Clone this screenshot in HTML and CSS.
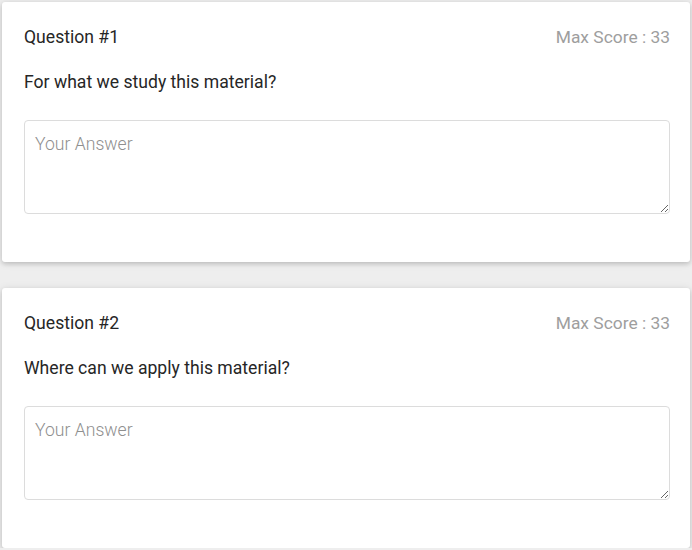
FILE: index.html
```html
<!DOCTYPE html>
<html>
<head>
<meta charset="utf-8">
<link rel="stylesheet" href="styles.css">
</head>
<body>
<div class="list">
  <div class="card">
    <div class="head">
      <span class="title">Question #1</span>
      <span class="score">Max Score : 33</span>
    </div>
    <p class="q">For what we study this material?</p>
    <textarea class="answer" placeholder="Your Answer"></textarea>
  </div>
  <div class="card">
    <div class="head">
      <span class="title">Question #2</span>
      <span class="score">Max Score : 33</span>
    </div>
    <p class="q">Where can we apply this material?</p>
    <textarea class="answer" placeholder="Your Answer"></textarea>
  </div>
</div>
</body>
</html>
```
FILE: styles.css
```css
html, body {
  margin: 0;
  padding: 0;
  background: #eeeeee;
  font-family: Roboto, "Liberation Sans", sans-serif;
}
.list {
  display: flex;
  flex-direction: column;
  gap: 26px;
  padding: 2px 2px 0 2px;
}
.card {
  background: #ffffff;
  border-radius: 3px;
  box-shadow: 0 2px 4px rgba(0,0,0,0.14), 0 1px 8px rgba(0,0,0,0.10);
  height: 260px;
  box-sizing: border-box;
  padding: 24px 20px 0 22px;
  display: flex;
  flex-direction: column;
}
.head {
  display: flex;
  justify-content: space-between;
  align-items: center;
  line-height: 22px;
  font-size: 17.6px;
}
.title {
  color: #262626;
}
.score {
  color: #9e9e9e;
  font-size: 17.4px;
}
.q {
  margin: 23px 0 0 0;
  line-height: 22px;
  font-size: 17.6px;
  color: #262626;
}
.answer {
  margin-top: 27px;
  height: 94px;
  box-sizing: border-box;
  width: 646px;
  border: 1px solid #dcdcdc;
  border-radius: 4px;
  padding: 13px 10px 9px 10px;
  font-family: Roboto, "Liberation Sans", sans-serif;
  font-weight: 300;
  font-size: 17.6px;
  color: #333;
  outline: none;
  resize: vertical;
}
.answer::placeholder {
  color: #8f8f8f;
  font-weight: 300;
}
```
